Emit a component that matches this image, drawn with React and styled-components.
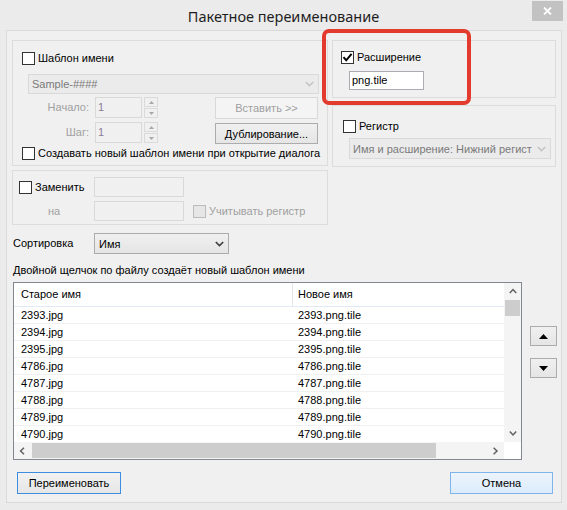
import React from 'react';
import styled, { createGlobalStyle } from 'styled-components';

const Global = createGlobalStyle`
  html, body { margin: 0; padding: 0; background: #ebebeb; }
  body { font-family: "Liberation Sans", Arial, sans-serif; font-size: 11px; color: #000; }
  * { box-sizing: border-box; }
`;

const Window = styled.div`
  position: relative;
  width: 567px;
  height: 510px;
  background: #ebebeb;
  display: flex;
  flex-direction: column;
  overflow: hidden;
`;

const TitleBar = styled.div`
  height: 30px;
  flex: none;
  display: grid;
  grid-template-columns: 1fr auto 1fr;
  align-items: start;
`;

const Title = styled.div`
  grid-column: 2;
  font-family: "Noto Sans", "Open Sans", sans-serif;
  font-size: 14.5px;
  color: #1e1e1e;
  line-height: 20px;
  margin-top: 6px;
  white-space: nowrap;
`;

const CloseBtn = styled.div`
  grid-column: 3;
  justify-self: end;
  width: 31px;
  height: 20px;
  margin-top: 1px;
  margin-right: 4px;
  background: #c2c2c2;
  display: flex;
  align-items: center;
  justify-content: center;
`;

const Client = styled.div`
  flex: none;
  margin-left: 6px;
  width: 556px;
  height: 473px;
  border: 1px solid #dadada;
  background: #f0f0f0;
  display: flex;
  flex-direction: column;
  padding: 9px 0 0 5px;
`;

const TopSection = styled.div`
  display: flex;
  gap: 4px;
  align-items: flex-start;
  height: 127px;
  flex: none;
`;

const Column = styled.div`
  display: flex;
  flex-direction: column;
  gap: 7px;
  width: 224px;
`;

const Group = styled.div`
  flex: none;
  width: ${p => p.$w}px;
  height: ${p => p.$h}px;
  margin-top: ${p => p.$mt || 0}px;
  border: 1px solid #dcdcdc;
  padding: ${p => p.$pad};
  display: flex;
  flex-direction: column;
  align-items: flex-start;
`;

const CheckRow = styled.div`
  display: flex;
  align-items: center;
  gap: 3px;
  height: 13px;
  margin-top: ${p => p.$mt || 0}px;
  margin-left: ${p => p.$ml || 0}px;
  white-space: nowrap;
`;

const Box = styled.span`
  flex: none;
  width: 13px;
  height: 13px;
  border: 1px solid ${p => (p.$disabled ? '#bcbcbc' : '#333333')};
  background: ${p => (p.$disabled ? '#e6e6e6' : '#ffffff')};
  display: flex;
  align-items: center;
  justify-content: center;
`;

const Label = styled.span`
  color: ${p => (p.$disabled ? '#a0a0a0' : '#000')};
  white-space: nowrap;
  line-height: 13px;
`;

const Combo = styled.div`
  flex: none;
  width: ${p => p.$w}px;
  height: ${p => p.$h}px;
  margin-top: ${p => p.$mt || 0}px;
  margin-left: ${p => p.$ml || 0}px;
  border: 1px solid ${p => (p.$disabled ? '#d9d9d9' : '#acacac')};
  background: ${p => (p.$disabled ? '#ebebeb' : 'linear-gradient(#f0f0f0, #e5e5e5)')};
  color: ${p => (p.$disabled ? '#7a7a7a' : '#000')};
  display: flex;
  align-items: center;
  padding: 0 4px 0 ${p => p.$pl || 3}px;
  gap: 4px;
  overflow: hidden;
`;

const ComboText = styled.span`
  flex: 1;
  white-space: nowrap;
`;

const FieldRow = styled.div`
  display: flex;
  align-items: flex-start;
  height: ${p => p.$h || 22}px;
  margin-top: ${p => (p.$mt === undefined ? 3 : p.$mt)}px;
  margin-left: ${p => p.$ml || 0}px;
`;

const FieldLabel = styled.span`
  width: ${p => p.$w}px;
  flex: none;
  text-align: ${p => p.$align || 'right'};
  padding-left: ${p => p.$pl || 0}px;
  line-height: ${p => p.$lh || 21}px;
  color: ${p => (p.$disabled ? '#a0a0a0' : '#000')};
  white-space: nowrap;
`;

const CheckCell = styled.div`
  width: ${p => p.$w}px;
  height: 20px;
  flex: none;
  display: flex;
  align-items: center;
  gap: 3px;
`;

const Input = styled.div`
  flex: none;
  width: ${p => p.$w}px;
  height: ${p => p.$h}px;
  margin-left: ${p => p.$ml || 0}px;
  margin-top: ${p => p.$mt || 0}px;
  border: 1px solid ${p => (p.$disabled ? '#d9d9d9' : '#abadb3')};
  background: ${p => (p.$disabled ? '#f0f0f0' : '#ffffff')};
  color: ${p => (p.$disabled ? '#8a7d98' : '#000')};
  padding-left: 2px;
  line-height: ${p => p.$h - 2}px;
  white-space: nowrap;
`;

const Spin = styled.div`
  flex: none;
  width: 14px;
  height: 21px;
  margin-left: 2px;
  display: flex;
  flex-direction: column;
  gap: 1px;
`;

const SpinHalf = styled.div`
  flex: 1;
  border: 1px solid #dadada;
  background: #f0f0f0;
  display: flex;
  align-items: center;
  justify-content: center;
`;

const Button = styled.div`
  flex: none;
  width: ${p => p.$w}px;
  height: ${p => p.$h || 22}px;
  margin-left: ${p => p.$ml || 0}px;
  margin-top: ${p => p.$mt || 0}px;
  border: 1px solid ${p => p.$border || '#acacac'};
  background: ${p => p.$bg || 'linear-gradient(#f0f0f0, #e5e5e5)'};
  color: ${p => (p.$disabled ? '#a0a0a0' : '#000')};
  display: flex;
  align-items: center;
  justify-content: center;
  white-space: nowrap;
`;

const SortRow = styled.div`
  display: flex;
  align-items: center;
  height: 21px;
  margin-top: 8px;
  margin-left: 1px;
  flex: none;
`;

const Hint = styled.div`
  margin-top: 10px;
  margin-left: 1px;
  line-height: 13px;
  height: 13px;
  white-space: nowrap;
  flex: none;
`;

const ListRow = styled.div`
  display: flex;
  margin-top: 5px;
  margin-left: 1px;
  flex: none;
`;

const ListBox = styled.div`
  width: 509px;
  height: 178px;
  border: 1px solid #828790;
  background: #fff;
  display: grid;
  grid-template-columns: 1fr 17px;
  grid-template-rows: 1fr 17px;
`;

const ListContent = styled.div`
  overflow: hidden;
`;

const ListHeader = styled.div`
  display: grid;
  grid-template-columns: 279px 1fr;
  height: 24px;
  border-bottom: 1px solid #e2ebf5;
`;

const HeaderCell = styled.div`
  padding-left: ${p => p.$pl}px;
  line-height: 22px;
  border-right: ${p => (p.$sep ? '1px solid #e5e5e5' : 'none')};
`;

const ListItem = styled.div`
  display: grid;
  grid-template-columns: 279px 1fr;
  height: 17px;
  border-bottom: 1px solid #f0f0f0;
`;

const ItemCell = styled.div`
  padding-left: ${p => p.$pl}px;
  line-height: 16px;
  white-space: nowrap;
`;

const VScroll = styled.div`
  background: #f4f4f4;
  display: flex;
  flex-direction: column;
  align-items: center;
`;

const HScroll = styled.div`
  background: #f4f4f4;
  display: flex;
  align-items: center;
`;

const Arrow = styled.div`
  flex: none;
  width: 17px;
  height: 17px;
  display: flex;
  align-items: center;
  justify-content: center;
`;

const VThumb = styled.div`
  width: 15px;
  height: 16px;
  background: #cdcdcd;
`;

const VTrack = styled.div`
  flex: 1;
  display: flex;
  flex-direction: column;
  align-items: center;
`;

const HTrack = styled.div`
  flex: 1;
  height: 17px;
  display: flex;
  align-items: center;
  padding-left: 1px;
`;

const HThumb = styled.div`
  width: 404px;
  height: 15px;
  background: #cdcdcd;
`;

const Corner = styled.div`
  background: #fff;
`;

const SideButtons = styled.div`
  display: flex;
  flex-direction: column;
  gap: 12px;
  margin-left: 8px;
  padding-top: 44px;
`;

const BottomRow = styled.div`
  display: flex;
  justify-content: space-between;
  margin-top: 12px;
  padding: 0 8px 0 5px;
  flex: none;
`;

const Annotation = styled.div`
  position: absolute;
  left: 322px;
  top: 29px;
  width: 149px;
  height: 76px;
  border: 4px solid #e23b2e;
  border-radius: 7px;
  pointer-events: none;
`;

const Check = () => (
  <svg width="11" height="11" viewBox="0 0 11 11">
    <path d="M1.5 5.2 L4.2 8.3 L9.6 1.8" fill="none" stroke="#000" strokeWidth="2" />
  </svg>
);

const CheckBox = ({ checked, disabled }) => (
  <Box $disabled={disabled}>{checked && <Check />}</Box>
);

const ChevronDown = ({ color = '#3c3c3c' }) => (
  <svg width="9" height="6" viewBox="0 0 9 6">
    <path d="M0.8 1 L4.5 4.6 L8.2 1" fill="none" stroke={color} strokeWidth="1.6" />
  </svg>
);

const Chev = ({ dir }) => {
  const d = {
    up: 'M0.8 5 L4 1.6 L7.2 5',
    down: 'M0.8 1.6 L4 5 L7.2 1.6',
    left: 'M5 0.8 L1.6 4 L5 7.2',
    right: 'M1.6 0.8 L5 4 L1.6 7.2',
  }[dir];
  const vertical = dir === 'up' || dir === 'down';
  return (
    <svg width={vertical ? 8 : 7} height={vertical ? 7 : 8} viewBox={vertical ? '0 0 8 7' : '0 0 7 8'}>
      <path d={d} fill="none" stroke="#606060" strokeWidth="1.5" />
    </svg>
  );
};

const Tri = ({ up, color = '#000', w = 9, h = 5 }) => (
  <svg width={w} height={h} viewBox={`0 0 ${w} ${h}`}>
    <polygon points={up ? `0,${h} ${w / 2},0 ${w},${h}` : `0,0 ${w / 2},${h} ${w},0`} fill={color} />
  </svg>
);

const SpinBox = () => (
  <Spin>
    <SpinHalf><Tri up w={5} h={3} color="#a8a8a8" /></SpinHalf>
    <SpinHalf><Tri w={5} h={3} color="#a8a8a8" /></SpinHalf>
  </Spin>
);

const files = ['2393', '2394', '2395', '4786', '4787', '4788', '4789', '4790'];

export default function App() {
  return (
    <Window>
      <Global />
      <TitleBar>
        <Title>Пакетное переименование</Title>
        <CloseBtn>
          <svg width="9" height="8" viewBox="0 0 9 8">
            <path d="M1 0.5 L8 7.5 M8 0.5 L1 7.5" stroke="#fff" strokeWidth="1.8" />
          </svg>
        </CloseBtn>
      </TitleBar>
      <Client>
        <TopSection>
          <Group $w={316} $h={126} $pad="11px 0 0 9px">
            <CheckRow>
              <CheckBox />
              <Label>Шаблон имени</Label>
            </CheckRow>
            <Combo $w={291} $h={20} $mt={9} $ml={6} $disabled>
              <ComboText>Sample-####</ComboText>
              <ChevronDown color="#c4c4c4" />
            </Combo>
            <FieldRow $ml={6}>
              <FieldLabel $w={61} $disabled>Начало:</FieldLabel>
              <Input $w={47} $h={21} $ml={6} $disabled>1</Input>
              <SpinBox />
              <Button $w={103} $ml={57} $disabled $border="#d9d9d9" $bg="#f4f4f4">Вставить &gt;&gt;</Button>
            </FieldRow>
            <FieldRow $ml={6}>
              <FieldLabel $w={61} $disabled>Шаг:</FieldLabel>
              <Input $w={47} $h={21} $ml={6} $disabled>1</Input>
              <SpinBox />
              <Button $w={103} $ml={57} $mt={1} $h={21}>Дублирование...</Button>
            </FieldRow>
            <CheckRow $mt={3}>
              <CheckBox />
              <Label>Создавать новый шаблон имени при открытие диалога</Label>
            </CheckRow>
          </Group>
          <Column>
            <Group $w={224} $h={58} $pad="10px 0 0 8px">
              <CheckRow>
                <CheckBox checked />
                <Label>Расширение</Label>
              </CheckRow>
              <Input $w={75} $h={19} $mt={7} $ml={8}>png.tile</Input>
            </Group>
            <Group $w={224} $h={62} $pad="14px 0 0 10px">
              <CheckRow>
                <CheckBox />
                <Label>Регистр</Label>
              </CheckRow>
              <Combo $w={202} $h={21} $mt={5} $ml={6} $disabled>
                <ComboText>Имя и расширение: Нижний регист</ComboText>
                <ChevronDown color="#c4c4c4" />
              </Combo>
            </Group>
          </Column>
        </TopSection>

        <Group $w={316} $h={55} $mt={3} $pad="6px 0 0 6px">
          <FieldRow $mt={0} $h={20}>
            <CheckCell $w={75}>
              <CheckBox />
              <Label>Заменить</Label>
            </CheckCell>
            <Input $w={90} $h={20} $disabled />
          </FieldRow>
          <FieldRow $mt={4} $h={20}>
            <FieldLabel $w={75} $align="left" $pl={29} $lh={20} $disabled>на</FieldLabel>
            <Input $w={90} $h={20} $disabled />
            <CheckRow $ml={9} $mt={4}>
              <CheckBox disabled />
              <Label $disabled>Учитывать регистр</Label>
            </CheckRow>
          </FieldRow>
        </Group>

        <SortRow>
          <FieldLabel $w={81} $align="left">Сортировка</FieldLabel>
          <Combo $w={135} $h={21} $pl={4}>
            <ComboText>Имя</ComboText>
            <ChevronDown />
          </Combo>
        </SortRow>

        <Hint>Двойной щелчок по файлу создаёт новый шаблон имени</Hint>

        <ListRow>
          <ListBox>
            <ListContent>
              <ListHeader>
                <HeaderCell $pl={7} $sep>Старое имя</HeaderCell>
                <HeaderCell $pl={5}>Новое имя</HeaderCell>
              </ListHeader>
              {files.map(f => (
                <ListItem key={f}>
                  <ItemCell $pl={7}>{f}.jpg</ItemCell>
                  <ItemCell $pl={5}>{f}.png.tile</ItemCell>
                </ListItem>
              ))}
            </ListContent>
            <VScroll>
              <Arrow><Chev dir="up" /></Arrow>
              <VTrack><VThumb /></VTrack>
              <Arrow><Chev dir="down" /></Arrow>
            </VScroll>
            <HScroll>
              <Arrow><Chev dir="left" /></Arrow>
              <HTrack><HThumb /></HTrack>
              <Arrow><Chev dir="right" /></Arrow>
            </HScroll>
            <Corner />
          </ListBox>
          <SideButtons>
            <Button $w={27} $h={20}><Tri up /></Button>
            <Button $w={27} $h={20}><Tri /></Button>
          </SideButtons>
        </ListRow>

        <BottomRow>
          <Button $w={104} $border="#3d8ee0" $bg="linear-gradient(#f2f2f2, #e6e6e6)">Переименовать</Button>
          <Button $w={103} $border="#7eb4ea" $bg="linear-gradient(#ecf4fc, #dcecfc)">Отмена</Button>
        </BottomRow>
      </Client>
      <Annotation />
    </Window>
  );
}
